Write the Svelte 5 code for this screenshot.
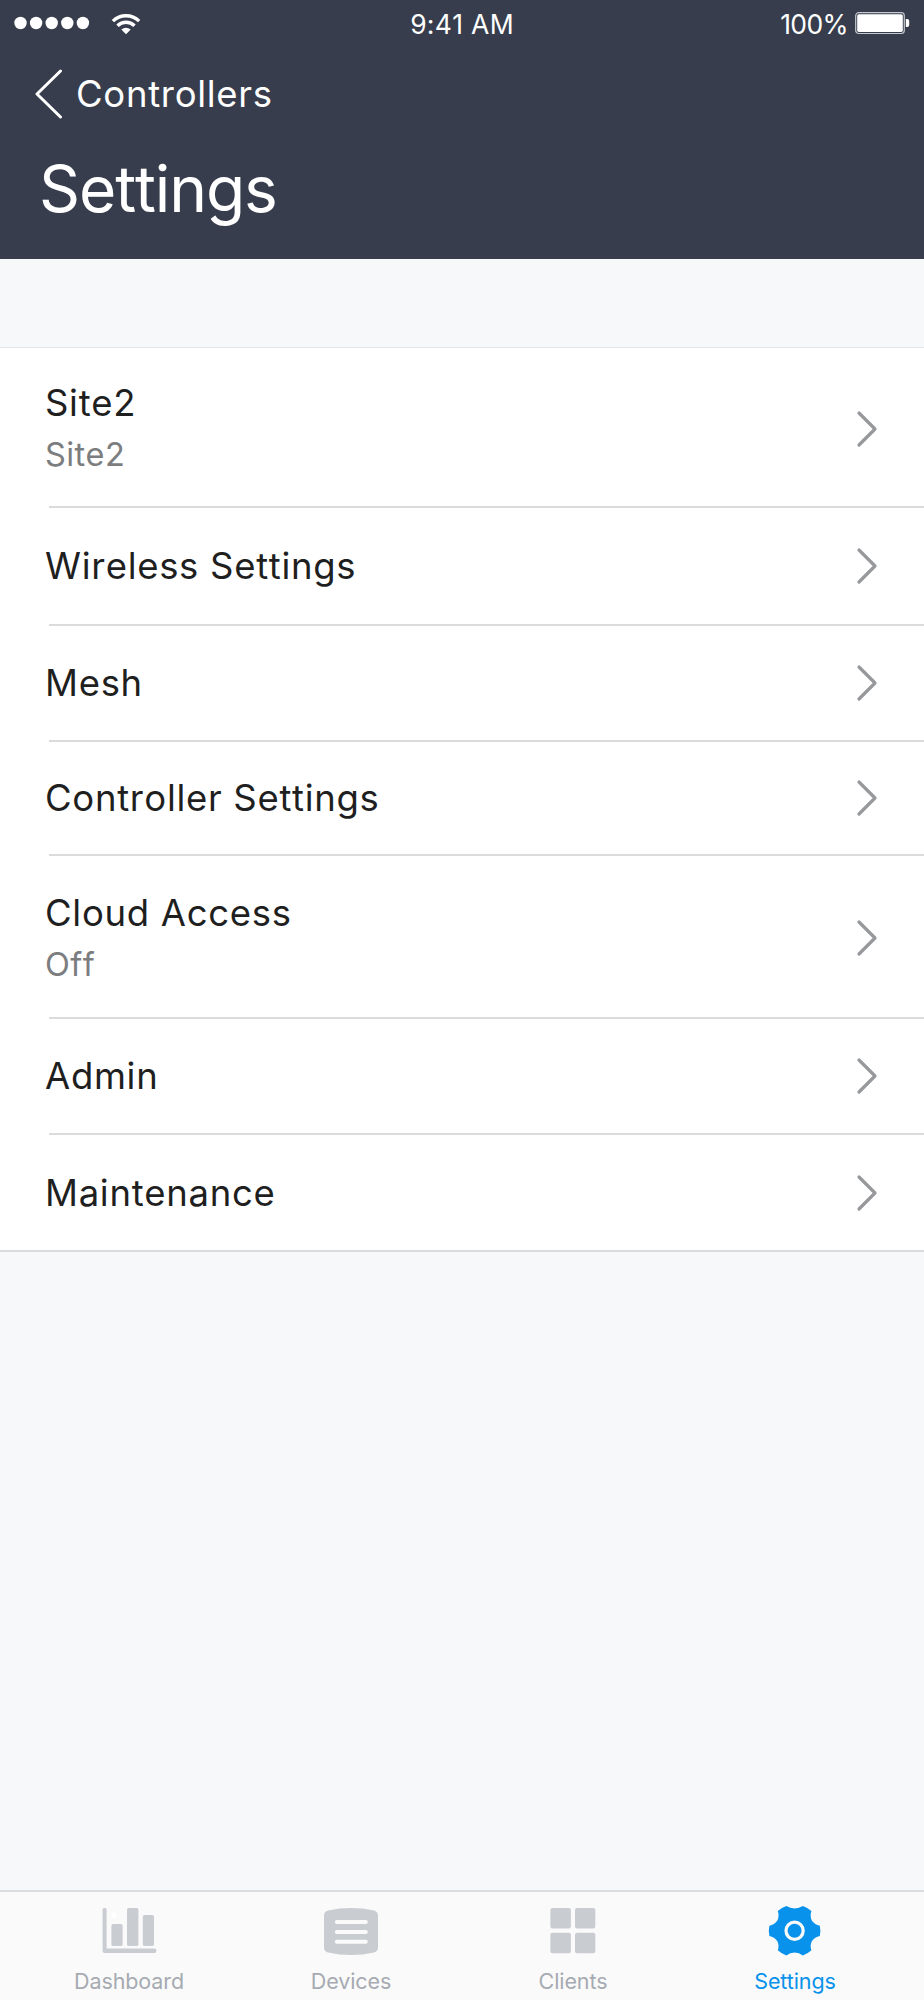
<script lang="ts">
    const rows = [
        { title: 'Site2', detail: 'Site2', height: 160 },
        { title: 'Wireless Settings', height: 118 },
        { title: 'Mesh', height: 116 },
        { title: 'Controller Settings', height: 114 },
        { title: 'Cloud Access', detail: 'Off', height: 163 },
        { title: 'Admin', height: 116 },
        { title: 'Maintenance', height: 117 }
    ];

    const tabs = ['Dashboard', 'Devices', 'Clients', 'Settings'];
    let activeTab = 'Settings';
</script>

<div class="screen">
    <header>
        <div class="status-bar">
            <div class="status-left">
                <svg class="signal" width="78" height="14" viewBox="0 0 78 14" fill="#fff">
                    {#each [6.5, 22.1, 37.7, 53.3, 68.9] as cx}
                        <circle {cx} cy="7" r="6.2" />
                    {/each}
                </svg>
                <svg class="wifi" width="30" height="22" viewBox="0 0 30 22" fill="none" stroke="#fff" stroke-width="3.4">
                    <path d="M1.9 8.1A18.6 18.6 0 0 1 28.1 8.1" />
                    <path d="M6.5 12.8A12.1 12.1 0 0 1 23.5 12.8" />
                    <path d="M15 21.3L10.3 16.6Q15 13 19.7 16.6Z" fill="#fff" stroke="none" />
                </svg>
            </div>
            <span class="time">9:41 AM</span>
            <div class="status-right">
                <span class="percent">100%</span>
                <svg class="battery" width="55" height="23" viewBox="0 0 55 23">
                    <rect x="0.7" y="0.7" width="48.6" height="20.8" rx="3" fill="none" stroke="#c5c9cf" stroke-width="1.2" />
                    <rect x="2.2" y="2.3" width="45.6" height="17.6" rx="1.6" fill="#fff" />
                    <path d="M50.8 7h1.4q2 0 2 2v4q0 2-2 2h-1.4z" fill="#fff" />
                </svg>
            </div>
        </div>
        <button class="back">
            <svg width="28" height="50" viewBox="0 0 28 50" fill="none" stroke="#fff" stroke-width="3" stroke-linecap="round" stroke-linejoin="round">
                <path d="M25.5 2L2 25L25.5 48" />
            </svg>
            <span>Controllers</span>
        </button>
        <h1>Settings</h1>
    </header>

    <main>
        <ul>
            {#each rows as row}
                <li class:double={row.detail} style="height: {row.height}px">
                    <div class="labels">
                        <span class="title">{row.title}</span>
                        {#if row.detail}
                            <span class="detail">{row.detail}</span>
                        {/if}
                    </div>
                    <svg width="22" height="38" viewBox="0 0 22 38" fill="none" stroke="#96989b" stroke-width="3.2" stroke-linecap="round" stroke-linejoin="round">
                        <path d="M3 3L19 19L3 35" />
                    </svg>
                </li>
            {/each}
        </ul>
    </main>

    <nav>
        {#each tabs as tab}
            <button class="tab" class:active={tab === activeTab} on:click={() => (activeTab = tab)}>
                <svg width="56" height="52" viewBox="0 0 56 52" fill="currentColor">
                    {#if tab === 'Dashboard'}
                        <path d="M1.6 4.5q0-1.5 1.5-1.5h1q1.5 0 1.5 1.5v39h48q1.8 0 1.8 2.2t-1.8 2.3H3.6q-2 0-2-2z" />
                        <rect x="10.4" y="19" width="11.2" height="22" rx="1.8" />
                        <rect x="26" y="3" width="11.4" height="38" rx="1.8" />
                        <rect x="41.8" y="10" width="11.2" height="31" rx="1.8" />
                        <circle cx="12.9" cy="10.2" r="2.6" fill="#fff" />
                    {:else if tab === 'Devices'}
                        <path d="M1 10.5Q1 6.3 5 5.4Q28 .8 51 5.4Q55 6.3 55 10.5V42.5Q55 46.6 51 47.4Q28 52.6 5 47.4Q1 46.6 1 42.5Z" />
                        <path d="M13.8 17h29M13.8 27h29M13.8 36.8h29" fill="none" stroke="#fafafa" stroke-width="4" stroke-linecap="round" />
                    {:else if tab === 'Clients'}
                        <rect x="5.4" y="3" width="20.5" height="20.6" rx="2" />
                        <rect x="30" y="3" width="20.3" height="20.6" rx="2" />
                        <rect x="5.4" y="27.8" width="20.5" height="20.4" rx="2" />
                        <rect x="30" y="27.8" width="20.3" height="20.4" rx="2" />
                    {:else}
                        <path d="M19.4 1Q23.1 3.4 27.6 3.4T35.8 1Q40.6 2.6 44.4 6Q42.6 11.5 45 15.7Q47.8 19.6 52.8 20.7Q54 25.7 52.8 30.9Q47.8 32 45 36Q42.6 40.3 44.4 45.2Q40.6 48.8 35.8 50.4Q32.1 47.4 27.6 47.4T19.4 50.4Q14.6 48.8 10.8 45.2Q12.6 40.3 10.2 36Q7.4 32 2.4 30.9Q1.2 25.7 2.4 20.7Q7.4 19.6 10.2 15.7Q12.6 11.5 10.8 6Q14.6 2.6 19.4 1Z" />
                        <circle cx="27.6" cy="25.7" r="8.6" fill="none" stroke="#fafafa" stroke-width="3.2" />
                    {/if}
                </svg>
                <span>{tab}</span>
            </button>
        {/each}
    </nav>
</div>

<style>
    :global(body) {
        margin: 0;
    }

    .screen {
        display: flex;
        flex-direction: column;
        width: 924px;
        height: 2000px;
        background: #f6f8fa;
        font-family: Inter, "Liberation Sans", sans-serif;
        font-kerning: none;
    }

    button {
        padding: 0;
        border: none;
        background: none;
        font-family: inherit;
        cursor: pointer;
    }

    svg {
        display: block;
        flex-shrink: 0;
    }

    header {
        box-sizing: border-box;
        height: 259px;
        background: #373d4c;
        color: #fff;
    }

    .status-bar {
        display: grid;
        grid-template-columns: 1fr auto 1fr;
        align-items: center;
        height: 48px;
        padding: 0 14px;
        font-size: 26.5px;
        line-height: 48px;
    }

    .status-left,
    .status-right {
        display: flex;
        align-items: center;
    }

    .signal {
        margin-top: -2px;
    }

    .wifi {
        margin-top: -1px;
        margin-left: 19px;
    }

    .status-right {
        justify-content: flex-end;
        gap: 7px;
    }

    .time {
        letter-spacing: 0.3px;
    }

    .percent {
        letter-spacing: -0.6px;
    }

    .battery {
        margin-top: -1px;
    }

    .back {
        display: flex;
        align-items: center;
        gap: 13px;
        height: 92px;
        padding-left: 35px;
        color: #fff;
        font-size: 36.5px;
        letter-spacing: 0.7px;
    }

    h1 {
        margin: 0;
        padding-left: 39px;
        font-size: 64px;
        font-weight: 400;
        line-height: 98px;
        letter-spacing: -1.1px;
    }

    main {
        flex: 1;
        padding-top: 89px;
    }

    ul {
        margin: 0;
        padding: 0;
        list-style: none;
        background: #fff;
        box-shadow: 0 -1px 0 #e4e6e9;
    }

    li {
        display: flex;
        align-items: center;
        justify-content: space-between;
        box-sizing: border-box;
        padding: 0 46px 2px 45px;
        background: linear-gradient(#dadbdd, #dadbdd) no-repeat 49px 100% / 100% 2px;
    }

    li:last-child {
        background-position-x: 0;
    }

    .double {
        padding-top: 3px;
    }

    .labels {
        display: flex;
        flex-direction: column;
        padding-top: 1px;
    }

    .title,
    .detail {
        line-height: 51px;
    }

    .title {
        color: #1f1f1f;
        font-size: 36.5px;
        letter-spacing: 0.7px;
    }

    .detail {
        color: #7c7d7f;
        font-size: 32.5px;
        letter-spacing: 0.4px;
    }

    nav {
        display: flex;
        box-sizing: border-box;
        height: 110px;
        padding: 0 18px;
        border-top: 2px solid #dcdddf;
        background: #fafafa;
    }

    .tab {
        display: flex;
        flex: 1;
        flex-direction: column;
        align-items: center;
        justify-content: flex-start;
        padding-top: 13px;
        color: #c9ccd1;
    }

    .tab span {
        color: #a6aab2;
        font-size: 21.5px;
        line-height: 26px;
        letter-spacing: -0.1px;
        margin-top: 11px;
    }

    .tab.active,
    .tab.active span {
        color: #0892eb;
    }
</style>
